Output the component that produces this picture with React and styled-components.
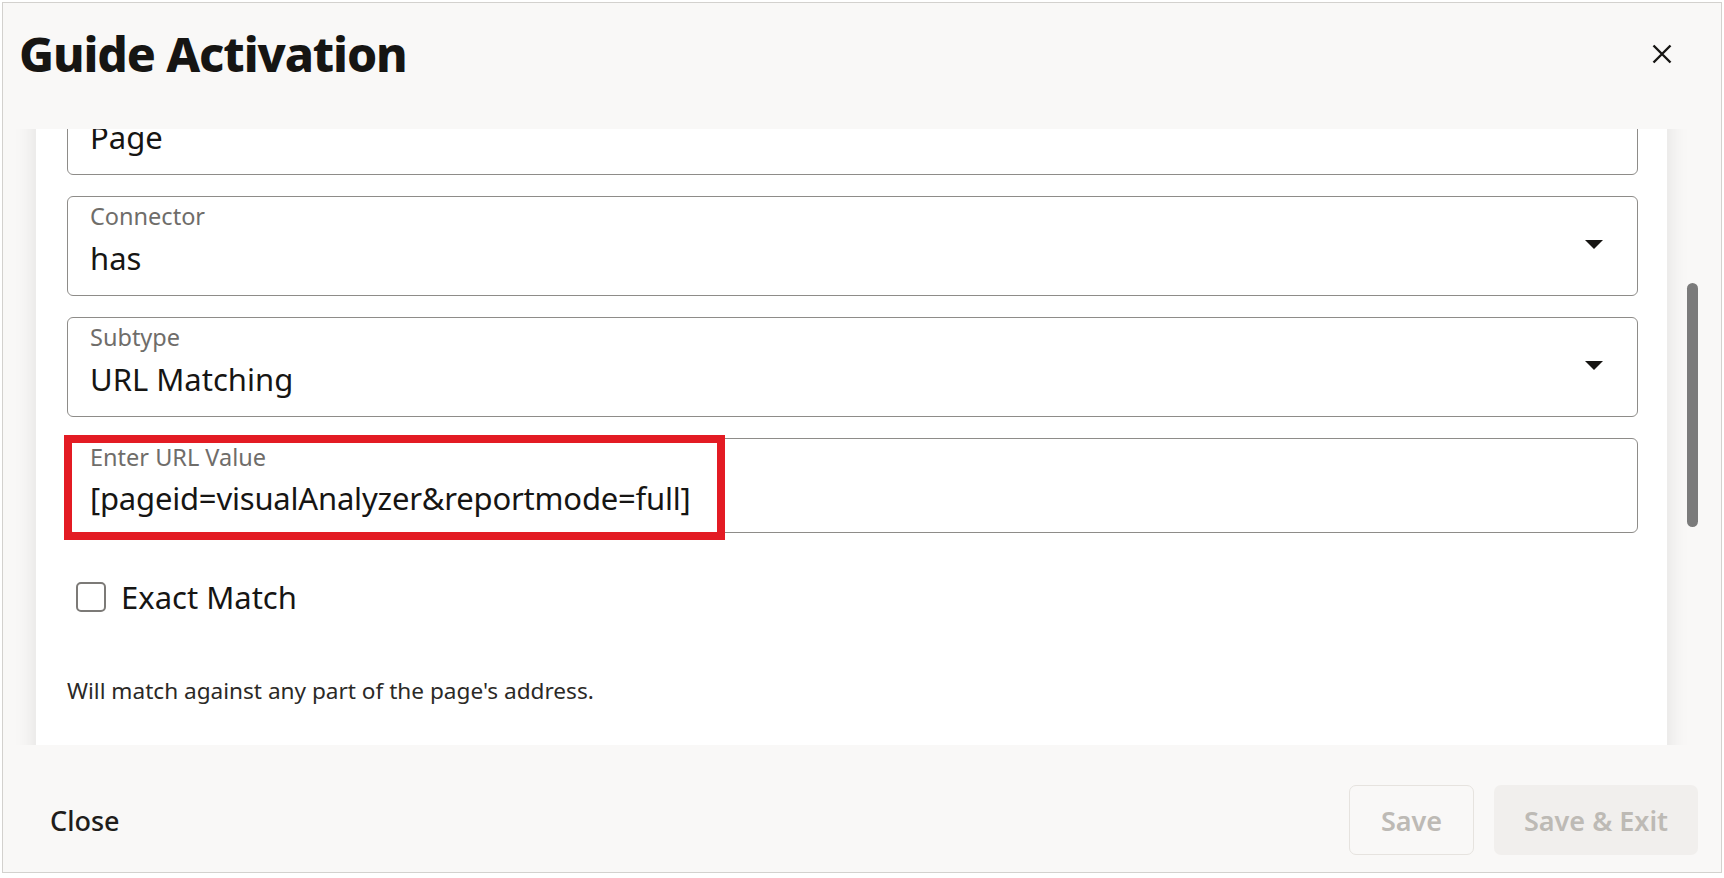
import React, { useLayoutEffect, useRef } from "react";
import styled, { createGlobalStyle } from "styled-components";

const GlobalStyle = createGlobalStyle`
  * { box-sizing: border-box; }
  body {
    margin: 0;
    background: #fff;
    font-family: "Noto Sans", "Open Sans", sans-serif;
    color: #161513;
  }
`;

const Dialog = styled.div`
  margin: 2px 0 0 2px;
  width: 1720px;
  height: 871px;
  border: 1px solid #d3d1ce;
  background: #f9f8f7;
  display: flex;
  flex-direction: column;
`;

const Header = styled.header`
  flex: 0 0 126px;
  display: flex;
  align-items: flex-start;
  justify-content: space-between;
  padding: 27px 35px 0 16px;
`;

const Title = styled.h1`
  margin: 0;
  font-size: 48px;
  line-height: 48px;
  font-weight: 800;
  letter-spacing: -1.1px;
`;

const IconButton = styled.button`
  width: 48px;
  height: 48px;
  display: flex;
  align-items: center;
  justify-content: center;
  border: 0;
  background: transparent;
  color: #161513;
  padding: 0;
`;

const Body = styled.div`
  flex: 1;
  position: relative;
  overflow: hidden;
`;

const ScrollArea = styled.div`
  height: 100%;
  overflow: hidden;
  padding: 0 54px 0 33px;
`;

const Thumb = styled.div`
  position: absolute;
  right: 23px;
  top: 154px;
  width: 11px;
  height: 244px;
  border-radius: 6px;
  background: #7b7b7b;
`;

const Panel = styled.div`
  background: #fff;
  box-shadow: 0 0 20px 2px rgba(0, 0, 0, 0.09);
  padding: 24px 29px 220px 31px;
  display: flex;
  flex-direction: column;
`;

const Field = styled.div`
  position: relative;
  height: ${({ $h }) => $h}px;
  margin-top: ${({ $gap }) => $gap}px;
  border: 1px solid #8e8c89;
  border-radius: 6px;
  display: flex;
  align-items: flex-start;
  padding: ${({ $pt }) => $pt}px 34px 0 22px;
`;

const FieldText = styled.div`
  flex: 1;
  display: flex;
  flex-direction: column;
`;

const Label = styled.span`
  font-size: 23.5px;
  line-height: 26px;
  color: #6f6d6a;
`;

const Value = styled.span`
  margin-top: ${({ $mt }) => $mt}px;
  font-size: 31px;
  line-height: 36px;
  letter-spacing: ${({ $tight }) => ($tight ? "-0.2px" : "0")};
  color: #161513;
  white-space: nowrap;
`;

const Caret = styled.svg`
  flex: none;
  margin-top: 37.5px;
`;

const Highlight = styled.div`
  position: absolute;
  left: -4px;
  top: -4px;
  width: 661px;
  height: 105px;
  border: 8px solid #e31b23;
  pointer-events: none;
`;

const CheckRow = styled.label`
  margin-top: 49px;
  display: flex;
  align-items: center;
  gap: 15px;
  padding-left: 9px;
  height: 30px;
  font-size: 31px;
  line-height: 36px;
`;

const Box = styled.span`
  width: 30px;
  height: 30px;
  border: 2px solid #7c7a77;
  border-radius: 5px;
  flex: none;
`;

const Help = styled.p`
  margin: 65px 0 0;
  font-size: 22.6px;
  line-height: 28px;
  color: #2b2926;
`;

const Footer = styled.footer`
  flex: 0 0 127px;
  display: flex;
  align-items: flex-start;
  justify-content: space-between;
  padding: 40px 23px 0 32px;
`;

const Actions = styled.div`
  display: flex;
  gap: 20px;
`;

const Button = styled.button`
  height: 70px;
  min-width: ${({ $w }) => $w}px;
  padding: 0 14px;
  border-radius: 7px;
  font-family: inherit;
  font-size: 27px;
  font-weight: ${({ $weight }) => $weight || 600};
  color: ${({ $tone }) => ($tone === "plain" ? "#1f1d1b" : "#bdbab5")};
  border: 1px solid ${({ $tone }) => ($tone === "outline" ? "#e6e3df" : "transparent")};
  background: ${({ $tone }) => ($tone === "solid" ? "#f1efed" : "transparent")};
`;

const DownCaret = () => (
  <Caret width="18" height="9" viewBox="0 0 18 9">
    <path d="M0 0h18L9 9z" fill="#161513" />
  </Caret>
);

const fields = [
  { label: "Type", value: "Page", gap: 0, select: false },
  { label: "Connector", value: "has", gap: 21, select: true },
  { label: "Subtype", value: "URL Matching", gap: 21, select: true },
];

export default function App() {
  const scrollRef = useRef(null);

  useLayoutEffect(() => {
    if (scrollRef.current) scrollRef.current.scrollTop = 78;
  }, []);

  return (
    <>
      <GlobalStyle />
      <Dialog>
        <Header>
          <Title>Guide Activation</Title>
          <IconButton aria-label="Close">
            <svg width="20" height="20" viewBox="0 0 20 20">
              <path d="M1.5 1.5l17 17M18.5 1.5l-17 17" stroke="#161513" strokeWidth="2.4" />
            </svg>
          </IconButton>
        </Header>
        <Body>
          <ScrollArea ref={scrollRef}>
            <Panel>
              {fields.map((f) => (
                <Field key={f.label} $h={100} $gap={f.gap} $pt={5.5}>
                  <FieldText>
                    <Label>{f.label}</Label>
                    <Value $mt={11}>{f.value}</Value>
                  </FieldText>
                  {f.select && <DownCaret />}
                </Field>
              ))}
              <Field $h={95} $gap={21} $pt={4.5}>
                <FieldText>
                  <Label>Enter URL Value</Label>
                  <Value $mt={10} $tight>[pageid=visualAnalyzer&amp;reportmode=full]</Value>
                </FieldText>
                <Highlight />
              </Field>
              <CheckRow>
                <Box />
                Exact Match
              </CheckRow>
              <Help>Will match against any part of the page's address.</Help>
            </Panel>
          </ScrollArea>
          <Thumb />
        </Body>
        <Footer>
          <Button $tone="plain" $weight={500}>Close</Button>
          <Actions>
            <Button $tone="outline" $w={125}>Save</Button>
            <Button $tone="solid" $w={204}>Save &amp; Exit</Button>
          </Actions>
        </Footer>
      </Dialog>
    </>
  );
}
